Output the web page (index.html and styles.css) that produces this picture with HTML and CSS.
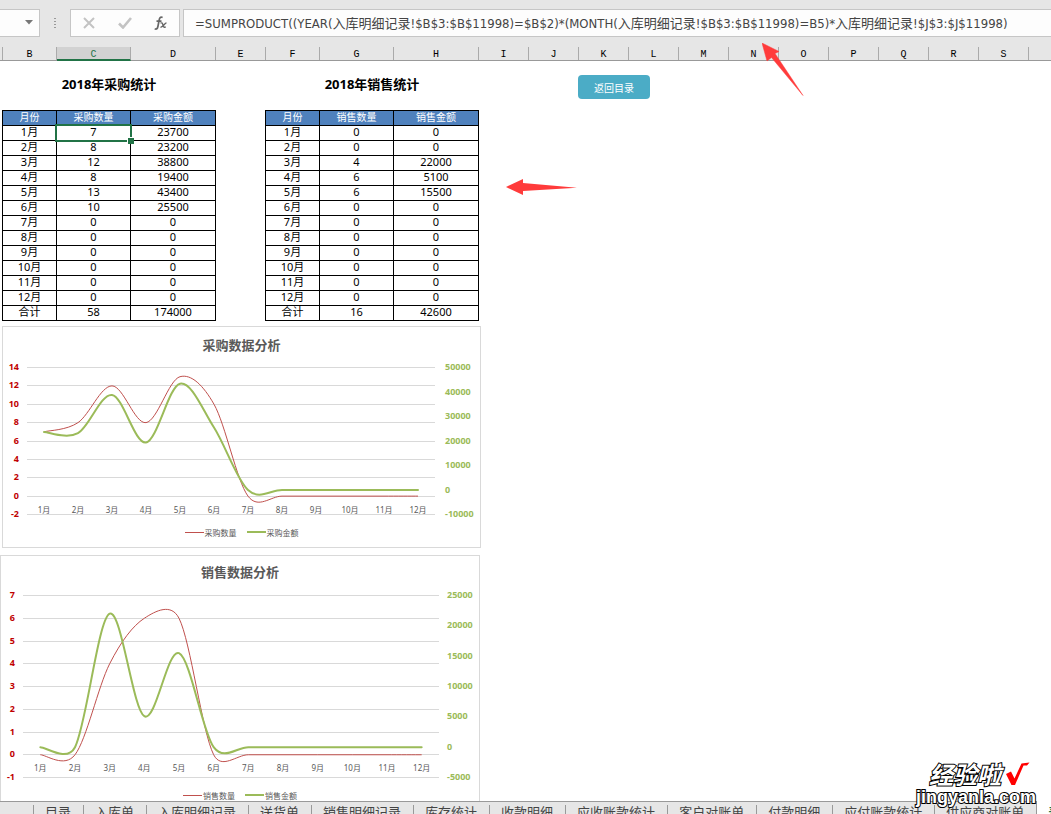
FILE: index.html
```html
<!DOCTYPE html>
<html lang="zh-CN">
<head>
<meta charset="utf-8">
<title>采购销售统计</title>
<link rel="stylesheet" href="styles.css">
</head>
<body>
<div class="app">
  <header class="formula-bar">
    <button class="name-box" aria-label="名称框"><svg width="8" height="5" viewBox="0 0 8 5"><path d="M0 0h8L4 4.5z" fill="#777"/></svg></button>
    <div class="grip"><i></i><i></i><i></i><i></i></div>
    <div class="formula-tools">
      <button aria-label="取消"><svg width="12" height="12" viewBox="0 0 12 12"><path d="M1 1l10 10M11 1L1 11" stroke="#c3c3c3" stroke-width="2" fill="none"/></svg></button>
      <button aria-label="输入"><svg width="14" height="12" viewBox="0 0 14 12"><path d="M1 6.5l4 4L13 1" stroke="#c3c3c3" stroke-width="2.6" fill="none"/></svg></button>
      <button aria-label="插入函数"><svg width="14" height="15" viewBox="0 0 14 15"><path d="M8.6 1.6C6.4.4 5.5 2 5.1 4.3L3.9 10.500C3.500 12.700 2.500 13.600.7 12.700M2.500 5.200h5" stroke="#666" stroke-width="1.700" fill="none"/><path d="M6.500 7.200c2-1 2 .5 2.600 2.200s1 2.400 2.700 1.500M12.500 6.900c-1.900.2-3.800 4.500-6 4.300" stroke="#666" stroke-width="1.400" fill="none"/></svg></button>
    </div>
    <input class="formula" aria-label="编辑栏" value="=SUMPRODUCT((YEAR(入库明细记录!$B$3:$B$11998)=$B$2)*(MONTH(入库明细记录!$B$3:$B$11998)=B5)*入库明细记录!$J$3:$J$11998)">
  </header>

  <div class="columns">
    <span></span><span>B</span><span class="current">C</span><span>D</span><span>E</span><span>F</span><span>G</span><span>H</span><span>I</span><span>J</span><span>K</span><span>L</span><span>M</span><span>N</span><span>O</span><span>P</span><span>Q</span><span>R</span><span>S</span>
  </div>

  <main class="sheet">
    <div class="panels">
      <section class="panel">
        <h2>2018年采购统计</h2>
        <table>
          <colgroup><col class="c-month"><col class="c-count"><col class="c-sum"></colgroup>
          <thead><tr><th>月份</th><th>采购数量</th><th>采购金额</th></tr></thead>
          <tbody>
            <tr><td>1月</td><td class="selected">7</td><td>23700</td></tr>
            <tr><td>2月</td><td>8</td><td>23200</td></tr>
            <tr><td>3月</td><td>12</td><td>38800</td></tr>
            <tr><td>4月</td><td>8</td><td>19400</td></tr>
            <tr><td>5月</td><td>13</td><td>43400</td></tr>
            <tr><td>6月</td><td>10</td><td>25500</td></tr>
            <tr><td>7月</td><td>0</td><td>0</td></tr>
            <tr><td>8月</td><td>0</td><td>0</td></tr>
            <tr><td>9月</td><td>0</td><td>0</td></tr>
            <tr><td>10月</td><td>0</td><td>0</td></tr>
            <tr><td>11月</td><td>0</td><td>0</td></tr>
            <tr><td>12月</td><td>0</td><td>0</td></tr>
            <tr><td>合计</td><td>58</td><td>174000</td></tr>
          </tbody>
        </table>
      </section>
      <section class="panel">
        <h2>2018年销售统计</h2>
        <table>
          <colgroup><col class="c-month"><col class="c-count"><col class="c-sum"></colgroup>
          <thead><tr><th>月份</th><th>销售数量</th><th>销售金额</th></tr></thead>
          <tbody>
            <tr><td>1月</td><td>0</td><td>0</td></tr>
            <tr><td>2月</td><td>0</td><td>0</td></tr>
            <tr><td>3月</td><td>4</td><td>22000</td></tr>
            <tr><td>4月</td><td>6</td><td>5100</td></tr>
            <tr><td>5月</td><td>6</td><td>15500</td></tr>
            <tr><td>6月</td><td>0</td><td>0</td></tr>
            <tr><td>7月</td><td>0</td><td>0</td></tr>
            <tr><td>8月</td><td>0</td><td>0</td></tr>
            <tr><td>9月</td><td>0</td><td>0</td></tr>
            <tr><td>10月</td><td>0</td><td>0</td></tr>
            <tr><td>11月</td><td>0</td><td>0</td></tr>
            <tr><td>12月</td><td>0</td><td>0</td></tr>
            <tr><td>合计</td><td>16</td><td>42600</td></tr>
          </tbody>
        </table>
      </section>
      <button class="back">返回目录</button>
    </div>

    <section class="chart purchase">
      <h3>采购数据分析</h3>
      <svg id="purchase-chart" width="477" height="168"></svg>
      <div class="legend"><span class="key red">采购数量</span><span class="key green">采购金额</span></div>
    </section>
    <section class="chart sales">
      <h3>销售数据分析</h3>
      <svg id="sales-chart" width="478" height="204"></svg>
      <div class="legend"><span class="key red">销售数量</span><span class="key green">销售金额</span></div>
    </section>
  </main>

  <nav class="tabs">
    <button>目录</button><button>入库单</button><button>入库明细记录</button><button>送货单</button><button>销售明细记录</button><button>库存统计</button><button>收款明细</button><button>应收账款统计</button><button>客户对账单</button><button>付款明细</button><button>应付账款统计</button><button>供应商对账单</button><button class="active">表</button>
  </nav>

  <svg class="arrow arrow-formula" width="42" height="54" viewBox="0 0 42 54"><path d="M0 0l17 8.500-4 2L41 52.500 9.500 14.500 5 18z" fill="#ff3b3b" stroke="#ff3b3b" stroke-width=".5"/></svg>
  <svg class="arrow arrow-table" width="72" height="17" viewBox="0 0 72 17"><path d="M0 8L17 0v4l54 4.700L17 12v4z" fill="#ff3b3b"/></svg>

  <div class="watermark">
    <div class="brand">经验啦<svg width="25" height="25" viewBox="0 0 25 25"><path d="M1 12l5-2.500 3.500 7L16.500 1.500l8-1L22 3.500h-3.500L10 23H6.500z" fill="#f00"/></svg></div>
    <div class="site">jingyanla.com</div>
  </div>
</div>
<script src="charts.js"></script>
</body>
</html>
```
FILE: styles.css
```css
* { box-sizing: border-box; }
body {
  margin: 0;
  background: #fff;
  font-family: "Noto Sans", "Noto Sans CJK SC", sans-serif;
  font-size: 11px;
  color: #000;
}
button { border: 0; padding: 0; background: none; font: inherit; color: inherit; }
h2, h3 { margin: 0; }
.app { position: relative; display: flex; flex-direction: column; height: 100vh; overflow: hidden; }

.formula-bar { display: flex; flex: none; height: 47px; padding: 9px 0 10px; background: #e6e6e6; }
.name-box, .formula-tools, .formula { background: #fdfdfd; border: 1px solid #c6c6c6; }
.name-box { display: flex; align-items: center; justify-content: flex-end; width: 40px; padding: 0 6px 2px 0; border-left: 0; }
.grip { display: flex; flex-direction: column; align-items: center; justify-content: center; gap: 2px; width: 30px; }
.grip i { width: 2px; height: 1px; background: #999; }
.formula-tools { display: flex; width: 110px; margin-right: 3px; }
.formula-tools button { display: flex; flex: 1; align-items: center; justify-content: center; }
.formula {
  flex: 1;
  min-width: 0;
  padding: 0 0 2px 11px;
  border-right: 0;
  border-radius: 0;
  font: 13px "DejaVu Sans Condensed", "Noto Sans CJK SC", sans-serif;
  color: #444;
}

.columns {
  display: grid;
  flex: none;
  grid-template-columns: 3px 54px 74px 85px 50px 54px 74px 85px repeat(11, 50px);
  height: 14px;
  background: #e6e6e6;
  border-bottom: 1px solid #999;
  font: 10px/16px "Liberation Mono", monospace;
  text-align: center;
}
.columns span { border-right: 1px solid #aaa; height: 13px; }
.columns .current { height: 14px; background: #d2d2d2; border-bottom: 2px solid #217346; color: #217346; }

.sheet { flex: 1; min-height: 0; overflow: hidden; }
.panels { display: flex; align-items: flex-start; gap: 49px; padding-left: 2px; }
.panel { width: 214px; }
.panel h2 { height: 49px; font-size: 13px; line-height: 46px; text-align: center; }
table { width: 214px; table-layout: fixed; border-collapse: separate; border-spacing: 0; border: solid #000; border-width: 1px 0 0 1px; }
.c-month { width: 54px; }
.c-count { width: 74px; }
.c-sum { width: 85px; }
th, td { height: 15px; padding: 0 0 2px; border: solid #000; border-width: 0 1px 1px 0; line-height: 12px; text-align: center; }
th { background: #4f81bd; color: #fff; font-size: 10px; font-weight: 400; }
.selected { position: relative; }
.selected::before { content: ""; position: absolute; inset: -2px; border: 2px solid #217346; }
.selected::after { content: ""; position: absolute; right: -4px; bottom: -4px; width: 6px; height: 6px; background: #217346; border: solid #fff; border-width: 1px 0 0 1px; }
.back { width: 72px; height: 24px; margin: 14px 0 0 50px; border-radius: 4px; background: #4bacc6; color: #fff; font-size: 10px; }

.chart { border: 1px solid #d9d9d9; background: #fff; }
.chart svg { display: block; }
.chart h3 { font-size: 13px; line-height: 18px; text-align: center; color: #595959; }
.purchase { width: 479px; margin: 5px 0 0 2px; padding: 9px 0 3px; }
.sales { width: 480px; margin-top: 7px; padding: 7px 0 3px; }
.legend { display: flex; justify-content: center; gap: 10px; height: 22px; padding-bottom: 2px; font-size: 8px; color: #595959; }
.key { display: flex; align-items: center; gap: 1px; }
.key::before { content: ""; width: 19px; height: 1px; background: #c0504d; }
.green::before { height: 2px; background: #9bbb59; }
.grid { stroke: #d9d9d9; shape-rendering: crispEdges; }
.axis { font-size: 9px; font-weight: 700; dominant-baseline: central; }
.left { fill: #c00000; text-anchor: end; }
.right { fill: #9bbb59; }
.month { font-size: 8px; fill: #595959; text-anchor: middle; dominant-baseline: central; }
.line-count { fill: none; stroke: #c0504d; stroke-width: 1; }
.line-sum { fill: none; stroke: #9bbb59; stroke-width: 2; stroke-linecap: round; }

.tabs { display: flex; flex: none; height: 13px; padding-left: 33px; overflow: hidden; background: linear-gradient(#999 1px, #e6e6e6 1px); }
.tabs button { flex: none; height: 24px; margin-top: 4px; padding: 0 12px 0 11px; border-left: 1px solid #999; font-size: 13px; line-height: 14px; color: #444; display: flex; }
.tabs .active { flex: 1 0 auto; margin-top: 0; padding-top: 4px; background: #fff; color: #217346; font-weight: 700; }

.arrow { position: absolute; }
.arrow-formula { left: 762px; top: 43px; }
.arrow-table { left: 506px; top: 179px; }
.watermark { position: absolute; right: 15px; bottom: 7px; color: #fff; -webkit-text-stroke: 2px #000; paint-order: stroke fill; font-weight: 700; }
.brand { display: flex; justify-content: flex-end; gap: 4px; padding-right: 6px; font-size: 24px; line-height: 25px; font-style: italic; }
.site { font: 700 18px/20px "Liberation Sans", sans-serif; text-align: right; }
```
FILE: charts.js
```javascript
function drawChart(id, o) {
  const out = [];
  const step = o.width / 12;
  const bottom = o.top + o.height;
  const scale = (v, min, max) => bottom - (v - min) / (max - min) * o.height;

  for (let v = o.min; v <= o.max; v += o.unit) {
    const y = Math.round(scale(v, o.min, o.max) - 0.5) + 0.5;
    out.push(`<line class="grid" x1="${o.left}" x2="${o.left + o.width}" y1="${y}" y2="${y}"/>`);
    out.push(`<text class="axis left" x="${o.left - 8}" y="${y - 1}">${v}</text>`);
  }
  for (let v = o.min2; v <= o.max2; v += o.unit2) {
    out.push(`<text class="axis right" x="${o.left + o.width + o.labelGap}" y="${scale(v, o.min2, o.max2) - 1}">${v}</text>`);
  }
  for (let i = 0; i < 12; i++) {
    out.push(`<text class="month" x="${o.left + step * (i + 0.5)}" y="${o.monthY}">${i + 1}月</text>`);
  }

  // Smoothed line: each control arm is at most half as long as its segment.
  const arm = (from, to, segment) => {
    const dx = (to[0] - from[0]) / 6, dy = (to[1] - from[1]) / 6;
    const k = Math.min(1, segment / 2 / Math.hypot(dx, dy));
    return [dx * k, dy * k];
  };
  const curve = (values, min, max) => {
    const p = values.map((v, i) => [o.left + step * (i + 0.5), scale(v, min, max)]);
    let d = `M${p[0]}`;
    for (let i = 0; i < p.length - 1; i++) {
      const a = p[i - 1] || p[i], b = p[i], c = p[i + 1], e = p[i + 2] || c;
      const length = Math.hypot(c[0] - b[0], c[1] - b[1]);
      const s = arm(a, c, length), t = arm(b, e, length);
      d += `C${b[0] + s[0]} ${b[1] + s[1]} ${c[0] - t[0]} ${c[1] - t[1]} ${c}`;
    }
    return d;
  };
  out.push(`<path class="line-count" d="${curve(o.count, o.min, o.max)}"/>`);
  out.push(`<path class="line-sum" d="${curve(o.sum, o.min2, o.max2)}"/>`);
  document.getElementById(id).innerHTML = out.join('');
}

drawChart('purchase-chart', {
  left: 24, top: 13.5, width: 408, height: 147, monthY: 155, labelGap: 10,
  min: -2, max: 14, unit: 2, min2: -10000, max2: 50000, unit2: 10000,
  count: [7, 8, 12, 8, 13, 10, 0, 0, 0, 0, 0, 0],
  sum: [23700, 23200, 38800, 19400, 43400, 25500, 0, 0, 0, 0, 0, 0]
});
drawChart('sales-chart', {
  left: 22, top: 14.5, width: 416, height: 182, monthY: 186, labelGap: 8,
  min: -1, max: 7, unit: 1, min2: -5000, max2: 25000, unit2: 5000,
  count: [0, 0, 4, 6, 6, 0, 0, 0, 0, 0, 0, 0],
  sum: [0, 0, 22000, 5100, 15500, 0, 0, 0, 0, 0, 0, 0]
});
```
